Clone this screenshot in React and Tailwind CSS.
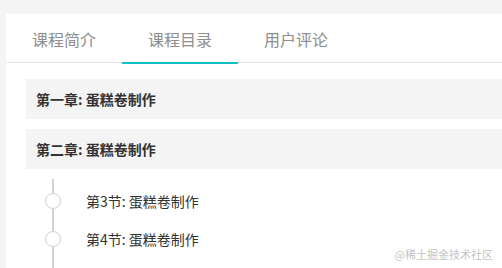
import React from 'react';

const tabs = ['课程简介', '课程目录', '用户评论'];
const chapters = ['第一章: 蛋糕卷制作', '第二章: 蛋糕卷制作'];
const sections = ['第3节: 蛋糕卷制作', '第4节: 蛋糕卷制作'];

export default function App() {
  const active = 1;

  return (
    <div
      className="relative h-screen overflow-hidden bg-[#f4f4f4] pt-[14px] pl-[6px]"
      style={{ fontFamily: '"Noto Sans CJK SC", "Noto Sans", sans-serif' }}
    >
      <div className="w-[640px] h-[300px] bg-white">
        {/* tabs */}
        <div className="flex border-b border-[#e6e6e6]">
          {tabs.map((t, i) => (
            <div
              key={t}
              className={`w-[116px] h-[50px] -mb-[2px] pt-[2px] flex items-center justify-center text-[16px] text-[#8e8e8e] border-b-2 ${
                i === active ? 'border-[#14bfc6]' : 'border-transparent'
              }`}
            >
              {t}
            </div>
          ))}
        </div>

        <div className="pl-[20px] pt-[16px]">
          {/* chapters */}
          <div className="space-y-[10px]">
            {chapters.map((c) => (
              <div
                key={c}
                className="h-[40px] bg-[#f4f4f4] pl-[10px] flex items-center text-[14px] font-bold text-[#333]"
              >
                {c}
              </div>
            ))}
          </div>

          {/* sections timeline */}
          <div className="mt-[10px] ml-[19px]">
            <div className="w-[16px] flex justify-center">
              <div className="w-[2px] h-[3px] bg-[#d2d2d2]" />
            </div>
            {sections.map((s) => (
              <div key={s} className="flex items-center">
                <div className="w-[16px] flex flex-col items-center">
                  <div className="w-[2px] h-[11px] bg-[#d2d2d2]" />
                  <div className="w-[16px] h-[16px] rounded-full border border-[#d2d2d2] bg-white" />
                  <div className="w-[2px] h-[11px] bg-[#d2d2d2]" />
                </div>
                <span className="ml-[25px] text-[14px] text-[#333]">{s}</span>
              </div>
            ))}
            <div className="w-[16px] flex justify-center">
              <div className="w-[2px] h-[20px] bg-[#d2d2d2]" />
            </div>
          </div>
        </div>
      </div>

      {/* watermark */}
      <div className="absolute right-[9px] top-[246px] text-[11px] text-[#c4c4c4]">
        @稀土掘金技术社区
      </div>
    </div>
  );
}
